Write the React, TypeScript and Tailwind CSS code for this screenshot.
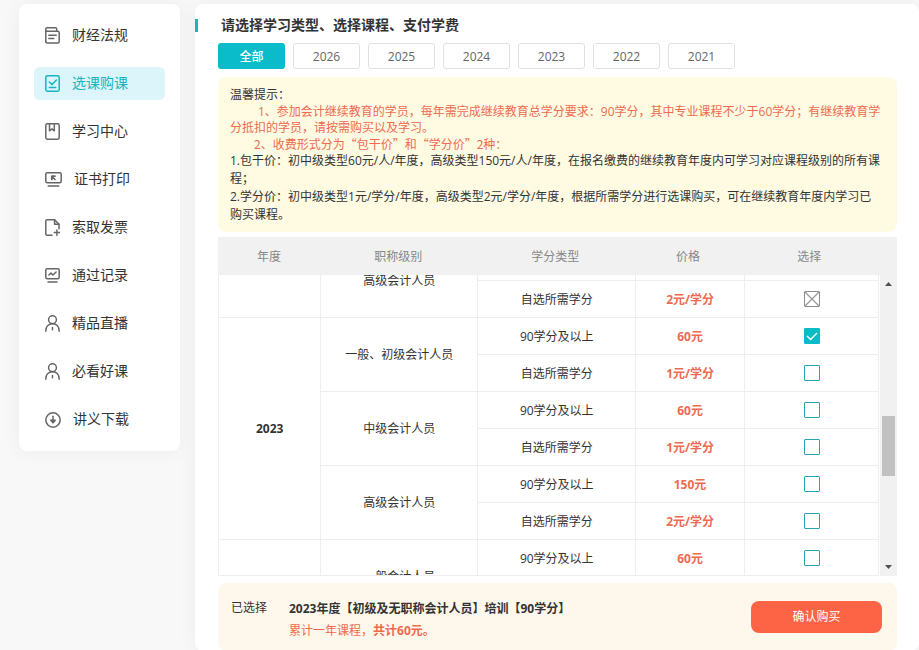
import React, {useLayoutEffect, useRef, useState} from "react";

const svgProps = {
    fill: "none",
    stroke: "currentColor",
    strokeWidth: 1.5,
    strokeLinecap: "round" as const,
    strokeLinejoin: "round" as const,
    "aria-hidden": true,
};

const RulesIcon = () => (
    <svg width="15" height="17" viewBox="0 0 15 17" {...svgProps}>
        <path d="M.8 14.6V2.2C.8 1.3 1.3.8 2.2.8h8.2c.8 0 1.3.5 1.3 1.3v2"/>
        <path d="M.8 4.2h11.9c.9 0 1.5.6 1.5 1.4v9c0 .9-.6 1.5-1.5 1.5H2.3c-.9 0-1.5-.6-1.5-1.5"/>
        <path d="M3.8 8.2h7.4M3.8 11.6h5"/>
    </svg>
);

const CourseIcon = () => (
    <svg width="15" height="17" viewBox="0 0 15 17" {...svgProps}>
        <rect x=".8" y=".8" width="13.4" height="15.4" rx="1.6"/>
        <path d="M4.3 7l2.8 2.6 4.3-4.6M4.3 12.6h6.4"/>
    </svg>
);

const StudyIcon = () => (
    <svg width="15" height="17" viewBox="0 0 15 17" {...svgProps}>
        <rect x=".8" y=".8" width="13.4" height="15.4" rx="1.6"/>
        <path d="M4.5 1v6.8l2.4-1.9 2.4 1.9V1"/>
    </svg>
);

const PrintIcon = () => (
    <svg width="17" height="15" viewBox="0 0 17 15" {...svgProps}>
        <rect x=".8" y=".8" width="15.4" height="10" rx="1.5"/>
        <path d="M3.2 13.9h10.6"/>
        <path d="M6.8 7.4V4.2H10M7 4.5l3 3" strokeWidth="1.7"/>
    </svg>
);

const InvoiceIcon = () => (
    <svg width="15" height="17" viewBox="0 0 15 17" {...svgProps}>
        <path d="M7 16.2H2.2c-.9 0-1.4-.6-1.4-1.4V2.2C.8 1.3 1.3.8 2.2.8h7.4l4.4 4.4v4.6"/>
        <path d="M9.6 1v4.2H14M9.2 13.6h5.4M11.9 10.9v5.4"/>
    </svg>
);

const RecordIcon = () => (
    <svg width="15" height="15" viewBox="0 0 15 15" {...svgProps}>
        <rect x=".8" y=".8" width="13.4" height="10" rx="1.5"/>
        <path d="M3.9 7l2-2 2 2 3.2-3M3 13.9h9"/>
    </svg>
);

const PersonIcon = () => (
    <svg width="15" height="17" viewBox="0 0 15 17" {...svgProps}>
        <circle cx="7.5" cy="4.7" r="3.9"/>
        <path d="M.8 16.2c0-4.4 2.600-7.400 6.700-7.400s6.700 3 6.700 7.400M7.500 12.600v2.200"/>
    </svg>
);

const DownloadIcon = () => (
    <svg width="16" height="16" viewBox="0 0 16 16" {...svgProps}>
        <circle cx="8" cy="8" r="7.2"/>
        <path d="M8 4.2v5"/>
        <path d="M5.8 8.2h4.4L8 10.9z" fill="currentColor"/>
    </svg>
);

const menu = [
    {label: "财经法规", icon: RulesIcon},
    {label: "选课购课", icon: CourseIcon, active: true},
    {label: "学习中心", icon: StudyIcon},
    {label: "证书打印", icon: PrintIcon},
    {label: "索取发票", icon: InvoiceIcon},
    {label: "通过记录", icon: RecordIcon},
    {label: "精品直播", icon: PersonIcon},
    {label: "必看好课", icon: PersonIcon},
    {label: "讲义下载", icon: DownloadIcon},
];

const tabs = ["全部", "2026", "2025", "2024", "2023", "2022", "2021"];

type Level = { name: string; full: string; single: string };
type YearGroup = { year: string; levels: Level[]; disabled?: boolean };

const groups: YearGroup[] = [
    {
        year: "2024",
        disabled: true,
        levels: [
            {name: "一般、初级会计人员", full: "60元", single: "1元/学分"},
            {name: "中级会计人员", full: "60元", single: "1元/学分"},
            {name: "高级会计人员", full: "150元", single: "2元/学分"},
        ],
    },
    {
        year: "2023",
        levels: [
            {name: "一般、初级会计人员", full: "60元", single: "1元/学分"},
            {name: "中级会计人员", full: "60元", single: "1元/学分"},
            {name: "高级会计人员", full: "150元", single: "2元/学分"},
        ],
    },
    {
        year: "2022",
        levels: [
            {name: "一般会计人员", full: "60元", single: "1元/学分"},
            {name: "中级会计人员", full: "60元", single: "1元/学分"},
            {name: "高级会计人员", full: "150元", single: "2元/学分"},
        ],
    },
];

const Columns = () => (
    <colgroup>
        <col className="w-[15.5%]"/>
        <col className="w-[23.8%]"/>
        <col className="w-[23.9%]"/>
        <col className="w-[16.5%]"/>
        <col/>
    </colgroup>
);

const CheckBox = (
    {
        label,
        checked,
        disabled,
        onChange
    }: {
        label: string;
        checked: boolean;
        disabled?: boolean;
        onChange: () => void;
    }) => (
    <span className="inline-grid size-4 align-middle">
        <input
            type="checkbox"
            aria-label={label}
            checked={checked}
            disabled={disabled}
            onChange={onChange}
            className="col-start-1 row-start-1 size-4 appearance-none rounded-[1px] border border-[#2aa5ad] bg-white checked:border-[#0abbc8] checked:bg-[#0abbc8] disabled:border-[#8c8c8c]"
        />
        {(checked || disabled) &&
            <svg
                viewBox="0 0 16 16"
                fill="none"
                aria-hidden
                className="pointer-events-none col-start-1 row-start-1 size-4"
            >
                {disabled
                    ? <path d="M1 1l14 14M15 1L1 15" stroke="#999" strokeWidth="1.3"/>
                    : <path d="M3 8l3.6 3.6L13 5" stroke="#fff" strokeWidth="1.4"/>}
            </svg>
        }
    </span>
);

const Sidebar = () => (
    <nav className="flex w-[161px] shrink-0 flex-col gap-[15px] self-start rounded-lg bg-white p-[15px] shadow-[0_0_20px_rgba(0,0,0,0.05)]">
        {menu.map(({label, icon: Icon, active}) => (
            <a
                key={label}
                href="#"
                className={active
                    ? "flex h-[33px] items-center gap-3 rounded-md bg-[#dbf5fa] pl-[11px] text-sm text-[#16b5c0]"
                    : "flex h-[33px] items-center gap-3 rounded-md pl-[11px] text-sm text-[#333]"}
            >
                <span className={active ? "text-[#16b5c0]" : "text-[#666]"}><Icon/></span>
                <span className="pb-0.5">{label}</span>
            </a>
        ))}
    </nav>
);

const Notice = () => (
    <div className="mt-2 rounded-lg bg-[#fffbe3] pt-[9px] pr-[15px] pb-2 pl-3 leading-[18px] text-[#333]">
        <p>温馨提示：</p>
        <div className="leading-4 text-[#ee6a50]">
            <p className="indent-7">1、参加会计继续教育的学员，每年需完成继续教育总学分要求：90学分，其中专业课程不少于60学分；有继续教育学分抵扣的学员，请按需购买以及学习。</p>
            {/* the CJK face gives the quotes their full width */}
            <p className="indent-6 font-['Noto_Sans_CJK_SC',sans-serif]">2、收费形式分为“包干价”和“学分价”2种：</p>
        </div>
        <p>1.包干价：初中级类型60元/人/年度，高级类型150元/人/年度，在报名缴费的继续教育年度内可学习对应课程级别的所有课程；</p>
        <p>2.学分价：初中级类型1元/学分/年度，高级类型2元/学分/年度，根据所需学分进行选课购买，可在继续教育年度内学习已购买课程。</p>
    </div>
);

const ScrollBar = () => (
    <div aria-hidden className="ml-px flex w-[17px] shrink-0 flex-col items-center bg-[#f1f1f1]">
        <svg width="17" height="17" viewBox="0 0 17 17" className="shrink-0"><path d="M5 11h7L8.5 7z" fill="#505050"/></svg>
        <div className="flex-[124]"/>
        <div className="h-[60px] w-[13px] bg-[#c1c1c1]"/>
        <div className="flex-[83]"/>
        <svg width="17" height="17" viewBox="0 0 17 17" className="shrink-0"><path d="M5 6h7l-3.5 4z" fill="#505050"/></svg>
    </div>
);

const cell = "h-[37px] border-r border-b border-[#eee]";

const CourseTable = () => {
    const [picked, setPicked] = useState("2023-0-full");
    const scroller = useRef<HTMLDivElement>(null);

    // open on the year that is on sale
    useLayoutEffect(() => {
        if (scroller.current) scroller.current.scrollTop = 179;
    }, []);

    return (
        <div className="mt-[5px] text-center">
            <div className="bg-[#f1f1f1] pr-[21px]">
                <table className="h-[38px] w-full table-fixed text-[#888]">
                    <Columns/>
                    <thead>
                        <tr>
                            {["年度", "职称级别", "学分类型", "价格", "选择"].map((name) => (
                                <th key={name} scope="col" className="pt-0.5 font-normal">{name}</th>
                            ))}
                        </tr>
                    </thead>
                </table>
            </div>
            <div className="flex h-[301px]">
                <div ref={scroller} className="flex-1 overflow-hidden border-b border-l border-[#eee]">
                    <table className="w-full table-fixed border-separate border-spacing-0 text-[#333]">
                        <Columns/>
                        <tbody>
                            {groups.map(({year, levels, disabled}) => levels.map((level, i) => (
                                ["full", "single"].map((kind) => {
                                    const id = `${year}-${i}-${kind}`;
                                    const first = kind === "full";
                                    const type = first ? "90学分及以上" : "自选所需学分";
                                    return (
                                        <tr key={id}>
                                            {first && i === 0 &&
                                                <th scope="rowgroup" rowSpan={levels.length * 2} className={`${cell} p-0`}>{year}</th>
                                            }
                                            {first && <td rowSpan={2} className={`${cell} p-0`}>{level.name}</td>}
                                            <td className={`${cell} pt-0.5`}>{type}</td>
                                            <td className={`${cell} pt-0.5 font-bold text-[#ee6a50]`}>
                                                {first ? level.full : level.single}
                                            </td>
                                            <td className={`${cell} p-0`}>
                                                <CheckBox
                                                    label={`${year} ${level.name} ${type}`}
                                                    checked={picked === id}
                                                    disabled={disabled}
                                                    onChange={() => setPicked(id)}
                                                />
                                            </td>
                                        </tr>
                                    );
                                })
                            )))}
                        </tbody>
                    </table>
                </div>
                <ScrollBar/>
            </div>
        </div>
    );
};

const Summary = () => (
    <div className="mt-[7px] flex items-center rounded-lg bg-[#fef8ec] py-[9px] pr-[15px] pl-[13px] text-[#333]">
        <span className="w-[58px] shrink-0 self-start pt-1.5 leading-5">已选择</span>
        <div className="flex-1 pt-1.5 leading-[22px]">
            <p className="font-bold">2023年度【初级及无职称会计人员】培训【90学分】</p>
            <p className="text-[#ee6a50]">累计一年课程，<b>共计60元。</b></p>
        </div>
        <button type="button" className="h-8 w-[131px] rounded-lg bg-[#fc6445] text-white">确认购买</button>
    </div>
);

export default function App() {
    const [tab, setTab] = useState("全部");

    return (
        <div
            lang="zh-CN"
            className="flex min-h-screen gap-[15px] bg-[#f8f8f8] pt-1 pl-[19px] font-['Open_Sans','Noto_Sans_CJK_SC',sans-serif] text-xs"
        >
            <Sidebar/>
            <main className="min-w-0 flex-1 rounded-lg bg-white shadow-[0_0_20px_rgba(0,0,0,0.05)]">
                <div className="flex items-center pt-[11px]">
                    <span className="h-[13px] w-[3px] bg-[#16b5c0]"/>
                    <h1 className="pl-[23px] text-sm font-bold text-[#333]">请选择学习类型、选择课程、支付学费</h1>
                </div>
                <div className="pt-2 pr-[22px] pl-[23px]">
                    <div className="flex flex-wrap gap-2">
                        {tabs.map((name) => (
                            <button
                                key={name}
                                type="button"
                                onClick={() => setTab(name)}
                                className={name === tab
                                    ? "h-[26px] w-[67px] rounded-[3px] bg-[#0abcc9] pt-0.5 font-medium text-white"
                                    : "h-[26px] w-[67px] rounded-[3px] border border-[#e0e0e0] pt-0.5 text-[#666]"}
                            >
                                {name}
                            </button>
                        ))}
                    </div>
                    <Notice/>
                    <CourseTable/>
                    <Summary/>
                </div>
            </main>
        </div>
    );
}
